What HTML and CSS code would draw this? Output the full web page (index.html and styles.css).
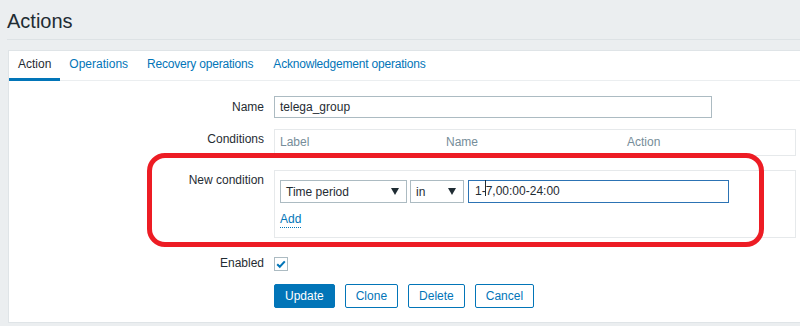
FILE: index.html
```html
<!DOCTYPE html>
<html lang="en">
<head>
<meta charset="utf-8">
<title>Actions</title>
<link rel="stylesheet" href="styles.css">
</head>
<body>
<header class="page-header">
  <h1 class="page-title">Actions</h1>
</header>
<main class="panel">
  <nav class="tabs">
    <a class="tab tab-active">Action</a>
    <a class="tab">Operations</a>
    <a class="tab tab-tight">Recovery operations</a>
    <a class="tab tab-tight">Acknowledgement operations</a>
  </nav>
  <div class="form">
    <div class="row row-name">
      <div class="label">Name</div>
      <div class="field">
        <div class="textbox textbox-name">telega_group</div>
      </div>
    </div>
    <div class="row row-conditions">
      <div class="label">Conditions</div>
      <div class="field">
        <div class="cond-table">
          <span class="cond-col cond-col-label">Label</span>
          <span class="cond-col cond-col-name">Name</span>
          <span class="cond-col cond-col-action">Action</span>
        </div>
      </div>
    </div>
    <div class="row row-newcond">
      <div class="label">New condition</div>
      <div class="field">
        <div class="newcond-box">
          <div class="newcond-line">
            <div class="select select-type"><span>Time period</span><span class="arrow"></span></div>
            <div class="select select-op"><span>in</span><span class="arrow"></span></div>
            <div class="textbox textbox-period">1-<span class="ibeam"></span>7,00:00-24:00</div>
          </div>
          <div class="add-line"><a class="add-link">Add</a></div>
        </div>
      </div>
    </div>
    <div class="row row-enabled">
      <div class="label">Enabled</div>
      <div class="field">
        <span class="checkbox">
          <svg width="12" height="12" viewBox="0 0 12 12"><path d="M2.2 6.2 L4.8 8.8 L9.8 3.4" fill="none" stroke="#0275b8" stroke-width="2"/></svg>
        </span>
      </div>
    </div>
    <div class="row row-buttons">
      <div class="label"></div>
      <div class="field buttons">
        <span class="btn btn-primary">Update</span>
        <span class="btn">Clone</span>
        <span class="btn">Delete</span>
        <span class="btn">Cancel</span>
      </div>
    </div>
  </div>
</main>
<div class="annotation"></div>
</body>
</html>
```
FILE: styles.css
```css
html, body {
  margin: 0;
  padding: 0;
}
body {
  background: #ebeef0;
  font-family: "Liberation Sans", Arial, sans-serif;
  font-size: 12px;
  color: #1f2c33;
  height: 326px;
  overflow: hidden;
}
.page-header {
  margin-left: 7px;
  padding: 9px 0 6px 0;
  border-bottom: 1px solid #dde2e5;
}
.page-title {
  margin: 0;
  font-size: 20px;
  line-height: 24px;
  font-weight: normal;
  color: #1f2c33;
}
.panel {
  margin: 10px 0 0 8px;
  background: #fff;
  border: 1px solid #dfe4e7;
  border-right: none;
  height: 273px;
  box-sizing: border-box;
}
.tabs {
  display: flex;
  border-bottom: 1px solid #ebeef0;
  height: 29px;
}
.tab {
  padding: 0 9px;
  line-height: 26px;
  border-bottom: 3px solid transparent;
  color: #0275b8;
  margin-bottom: -1px;
}
.tab-tight {
  letter-spacing: -0.2px;
  padding: 0 10px;
}
.tab-active {
  color: #1f2c33;
  border-bottom-color: #0275b8;
}
.form {
  padding: 15px 4px 0 0;
}
.row {
  display: grid;
  grid-template-columns: 255px 1fr;
  column-gap: 10px;
  align-items: start;
}
.label {
  text-align: right;
  line-height: 21px;
}
.row-name .label { line-height: 22px; }
.row-conditions { margin-top: 11px; }
.row-newcond { margin-top: 14px; }
.row-newcond .label { line-height: 20px; }
.row-enabled { margin-top: 15px; }
.row-buttons { margin-top: 10px; }

.textbox {
  box-sizing: border-box;
  height: 22px;
  line-height: 20px;
  border: 1px solid #acbbc2;
  padding: 0 5px;
  background: #fff;
  white-space: nowrap;
}
.textbox-name {
  width: 438px;
}
.cond-table {
  box-sizing: border-box;
  height: 27px;
  border: 1px solid #e6e9eb;
  display: grid;
  grid-template-columns: 166px 181px 1fr;
  line-height: 25px;
  color: #768d99;
}
.cond-col {
  padding-left: 5px;
}
.newcond-box {
  box-sizing: border-box;
  height: 68px;
  border: 1px solid #e6e9eb;
  padding: 9px 5px 0 5px;
}
.newcond-line {
  display: flex;
  gap: 3px;
}
.select {
  box-sizing: border-box;
  height: 23px;
  border: 1px solid #acbbc2;
  display: flex;
  align-items: center;
  justify-content: space-between;
  padding: 0 7px 0 5px;
}
.select-type { width: 127px; }
.select-op { width: 54px; }
.arrow {
  width: 0;
  height: 0;
  border-left: 4px solid transparent;
  border-right: 4px solid transparent;
  border-top: 7px solid #1f2c33;
}
.textbox-period {
  height: 23px;
  line-height: 21px;
  width: 261px;
  margin-left: 1px;
  border-color: #2c73b4;
  padding-left: 6px;
}
.ibeam {
  position: relative;
  display: inline-block;
  width: 0;
  height: 12px;
}
.ibeam::after {
  content: "";
  position: absolute;
  left: -1px;
  top: -3px;
  width: 1px;
  height: 16px;
  background: #1f2c33;
}
.add-line {
  margin-top: 8px;
}
.add-link {
  display: inline-block;
  color: #0275b8;
  line-height: 16px;
  border-bottom: 1px dotted #0275b8;
}
.checkbox {
  display: flex;
  align-items: center;
  justify-content: center;
  box-sizing: border-box;
  width: 14px;
  height: 14px;
  margin-top: 4px;
  border: 1px solid #acbbc2;
  background: #fff;
}
.buttons {
  display: flex;
  gap: 10px;
}
.btn {
  box-sizing: border-box;
  height: 24px;
  line-height: 22px;
  padding: 0 10px;
  border: 1px solid #0275b8;
  border-radius: 2px;
  color: #0275b8;
  background: #fff;
}
.btn-primary {
  background: #0275b8;
  color: #fff;
}
.annotation {
  position: absolute;
  left: 147px;
  top: 153px;
  width: 617px;
  height: 94px;
  box-sizing: border-box;
  border: 5px solid #ed1c24;
  border-radius: 18px;
}
```
